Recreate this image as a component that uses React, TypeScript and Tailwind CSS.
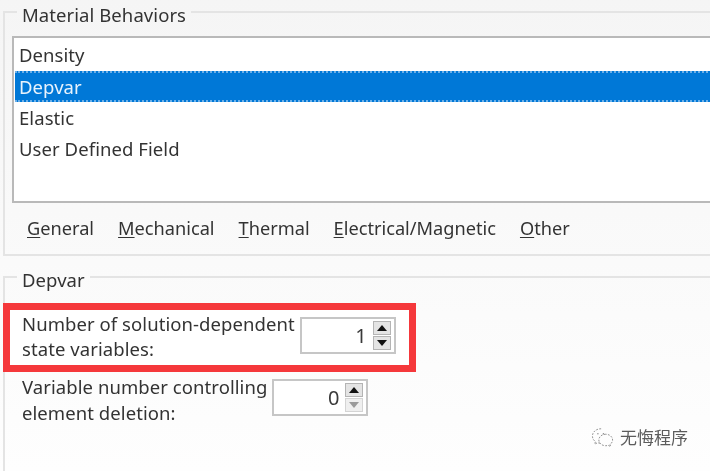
import React from 'react';

const rows = ['Density', 'Depvar', 'Elastic', 'User Defined Field'];

const tabs: [string, string][] = [
  ['G', 'eneral'],
  ['M', 'echanical'],
  ['T', 'hermal'],
  ['E', 'lectrical/Magnetic'],
  ['O', 'ther'],
];

const Arrow: React.FC<{ down?: boolean; disabled?: boolean }> = ({ down, disabled }) => (
  <svg width="10" height="6" viewBox="0 0 10 6" className="block">
    <path d={down ? 'M0 0H10L5 6Z' : 'M0 6H10L5 0Z'} fill={disabled ? '#9a9a9a' : '#111111'} />
  </svg>
);

const Spin: React.FC<{ value: string; downDisabled?: boolean; className: string }> = ({ value, downDisabled, className }) => (
  <div className={`flex h-[37px] w-[96px] shrink-0 items-center justify-end gap-[6px] border-2 border-[#c6c6c6] bg-white pr-[3px] ${className}`}>
    <span className="text-[20px] leading-none text-[#3a3a3a]">{value}</span>
    <div className="flex w-[18px] flex-col gap-[1px]">
      <div className="flex h-[14px] items-center justify-center border border-[#b4b4b4] bg-[#e4e4e4]">
        <Arrow />
      </div>
      <div
        className={
          downDisabled
            ? 'flex h-[14px] items-center justify-center border border-[#d4d4d4] bg-[#efefef]'
            : 'flex h-[14px] items-center justify-center border border-[#b4b4b4] bg-[#e4e4e4]'
        }
      >
        <Arrow down disabled={downDisabled} />
      </div>
    </div>
  </div>
);

export default function App() {
  return (
    <div className="relative h-[471px] w-[710px] overflow-hidden bg-gradient-to-b from-[#f5f5f5] to-[#fefefe] font-['Noto_Sans',sans-serif] text-[18.5px] leading-[25px] tracking-[0.07px] text-[#333333]">
      <div className="h-full w-full pl-[3px] blur-[0.4px]">
        {/* Material Behaviors */}
        <fieldset className="-mt-[4px] h-[260px] w-[730px] border-2 border-[#e4e4e4] pl-[7px]">
          <legend className="ml-[5px] px-[5px] pt-[7px] pb-[1px] leading-[24px]">Material Behaviors</legend>
          <div className="mt-[8px] h-[167px] border-2 border-r-0 border-[#b9b9b9] bg-white pl-[1px] pt-[1px]">
            {rows.map(row => (
              <div
                key={row}
                className={
                  row === 'Depvar'
                    ? 'mt-[1px] h-[31px] border-y-2 border-dotted border-[#6db0e8] bg-[#0078d7] pl-[4px] leading-[27px] text-[#e8f3fc]'
                    : 'h-[31px] pl-[4px] leading-[31px]'
                }
              >
                {row}
              </div>
            ))}
          </div>
          <div className="mt-[13px] flex gap-[24px] pl-[15px] text-[18.2px] tracking-normal">
            {tabs.map(([key, rest]) => (
              <span key={key}>
                <span className="underline underline-offset-2">{key}</span>
                {rest}
              </span>
            ))}
          </div>
        </fieldset>

        {/* Depvar */}
        <fieldset className="mt-[5px] h-[230px] w-[730px] border-2 border-b-0 border-r-0 border-[#e4e4e4]">
          <legend className="ml-[12px] px-[5px] pt-[7px] pb-[1px] leading-[24px]">Depvar</legend>
          <div className="-ml-[2px] mt-[10px] flex h-[69px] w-[413px] items-start gap-[5px] border-[7px] border-[#f5383b] bg-white pl-[12px] pt-[1px]">
            <div className="whitespace-nowrap">
              Number of solution-dependent
              <br />
              state variables:
            </div>
            <Spin value="1" className="mt-[6px]" />
          </div>
          <div className="mt-[2px] flex items-start gap-[5px] pl-[17px] leading-[26px]">
            <div className="whitespace-nowrap">
              Variable number controlling
              <br />
              element deletion:
            </div>
            <Spin value="0" downDisabled className="mt-[5px]" />
          </div>
        </fieldset>
      </div>

      {/* Watermark */}
      <div className="absolute left-[590px] top-[424px] flex items-center gap-[5px] text-[#5c5c5c] blur-[0.3px]">
        <svg width="25" height="22" viewBox="0 0 27 24" fill="none" stroke="#8a8a8a" strokeWidth="1" strokeDasharray="2 1.5">
          <path d="M12 3C6.500 3 2.500 6.600 2.500 11c0 2.500 1.300 4.600 3.300 6l-.8 2.800 3.200-1.600c1.200.4 2.500.6 3.800.6" />
          <path d="M17 9c-4.300 0-7.500 2.800-7.500 6.300s3.200 6.200 7.500 6.200c1 0 1.900-.1 2.800-.4l2.600 1.400-.7-2.400c1.700-1.200 2.800-2.800 2.800-4.800C24.500 11.800 21.300 9 17 9Z" />
          <circle cx="8.500" cy="8.500" r="0.800" fill="#8a8a8a" stroke="none" />
          <circle cx="14.500" cy="8.500" r="0.800" fill="#8a8a8a" stroke="none" />
        </svg>
        <span className="font-['Noto_Sans_CJK_SC',sans-serif] text-[17px] tracking-normal">无悔程序</span>
      </div>
    </div>
  );
}
